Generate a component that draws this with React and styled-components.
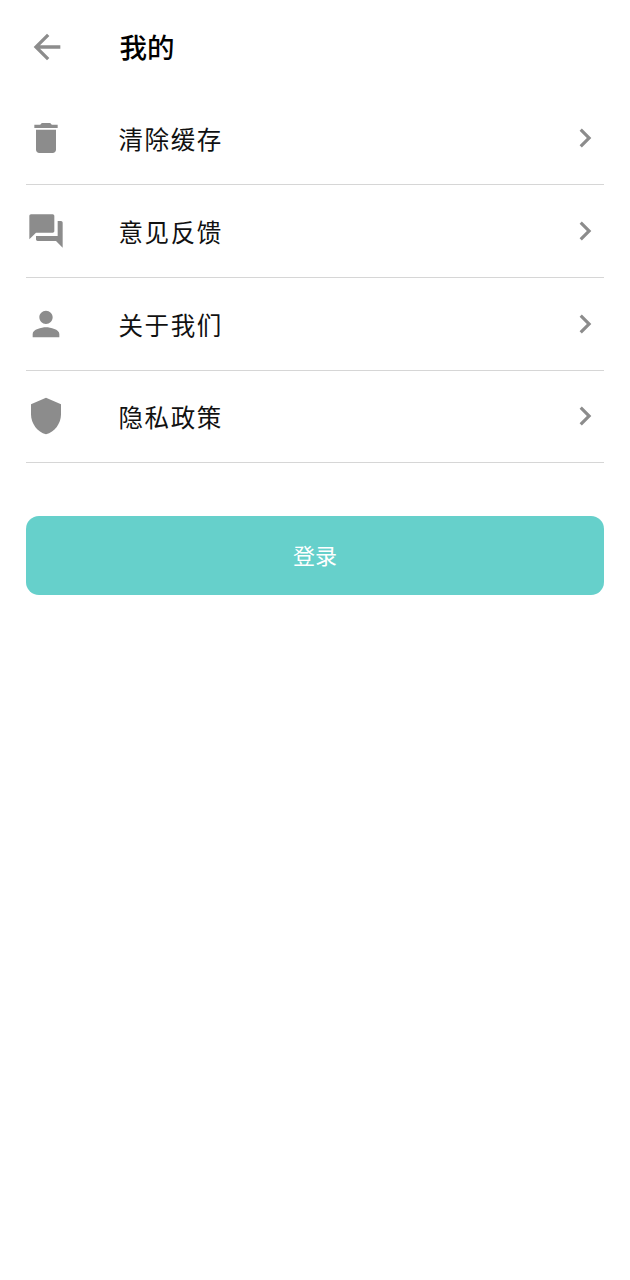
import React from "react";
import styled, { createGlobalStyle } from "styled-components";

const GlobalStyle = createGlobalStyle`
  html, body {
    margin: 0;
    padding: 0;
    background: #fff;
    font-family: "Noto Sans CJK SC", "Noto Sans", sans-serif;
  }
`;

const Page = styled.div`
  width: 630px;
  height: 1280px;
  padding: 0 26px;
  box-sizing: border-box;
  background: #fff;
`;

const Header = styled.header`
  height: 92.5px;
  display: flex;
  align-items: center;
  padding-top: 1px;
  box-sizing: border-box;
`;

const IconSlot = styled.div`
  width: 40px;
  height: 40px;
  flex: none;
  margin-right: 53px;
  color: #8c8c8c;
  svg {
    display: block;
    width: 100%;
    height: 100%;
    fill: currentColor;
  }
`;

const BackSlot = styled(IconSlot)`
  margin-left: 1px;
  margin-right: 53px;
`;

const Title = styled.h1`
  margin: 0 0 2px -0.5px;
  font-size: 27.5px;
  line-height: 36px;
  font-weight: 500;
  color: #000;
`;

const Row = styled.div`
  height: 92.7px;
  display: flex;
  align-items: center;
  border-bottom: 1px solid #d6d6d6;
  box-sizing: border-box;
`;

const Label = styled.span`
  flex: 1;
  margin-left: -0.5px;
  padding-top: 2px;
  font-size: 24.5px;
  line-height: 32px;
  letter-spacing: 1.6px;
  color: #111;
`;

const Chevron = styled.div`
  width: 38px;
  height: 38px;
  flex: none;
  color: #8c8c8c;
  svg {
    display: block;
    width: 100%;
    height: 100%;
    fill: currentColor;
  }
`;

const LoginButton = styled.button`
  display: block;
  width: 100%;
  height: 79px;
  margin-top: 52.7px;
  padding: 0 0 2px;
  border: 0;
  border-radius: 13px;
  background: #66d0cb;
  color: #fff;
  font-family: inherit;
  font-size: 22px;
`;

const icons = {
  back: "M20 11H7.83l5.59-5.59L12 4l-8 8 8 8 1.41-1.41L7.83 13H20v-2z",
  trash: "M6 19c0 1.1.9 2 2 2h8c1.1 0 2-.9 2-2V7H6v12zM19 4h-3.5l-1-1h-5l-1 1H5v2h14V4z",
  chat: "M21 6h-2v9H6v2c0 .55.45 1 1 1h11l4 4V7c0-.55-.45-1-1-1zm-4 6V3c0-.55-.45-1-1-1H3c-.55 0-1 .45-1 1v14l4-4h10c.55 0 1-.45 1-1z",
  person: "M12 12c2.21 0 4-1.79 4-4s-1.79-4-4-4-4 1.79-4 4 1.79 4 4 4zm0 2c-2.67 0-8 1.34-8 4v2h16v-2c0-2.66-5.33-4-8-4z",
  shield: "M12 1L3 5v6c0 5.55 3.84 10.74 9 12 5.16-1.26 9-6.45 9-12V5l-9-4z",
  chevron: "M10 6L8.59 7.41 13.17 12l-4.58 4.59L10 18l6-6z",
};

const Icon = ({ name }) => (
  <svg viewBox="0 0 24 24">
    <path d={icons[name]} />
  </svg>
);

const items = [
  { icon: "trash", label: "清除缓存" },
  { icon: "chat", label: "意见反馈" },
  { icon: "person", label: "关于我们" },
  { icon: "shield", label: "隐私政策" },
];

const App = () => (
  <Page>
    <GlobalStyle />
    <Header>
      <BackSlot>
        <Icon name="back" />
      </BackSlot>
      <Title>我的</Title>
    </Header>
    {items.map((item) => (
      <Row key={item.label}>
        <IconSlot>
          <Icon name={item.icon} />
        </IconSlot>
        <Label>{item.label}</Label>
        <Chevron>
          <Icon name="chevron" />
        </Chevron>
      </Row>
    ))}
    <LoginButton>登录</LoginButton>
  </Page>
);

export default App;
